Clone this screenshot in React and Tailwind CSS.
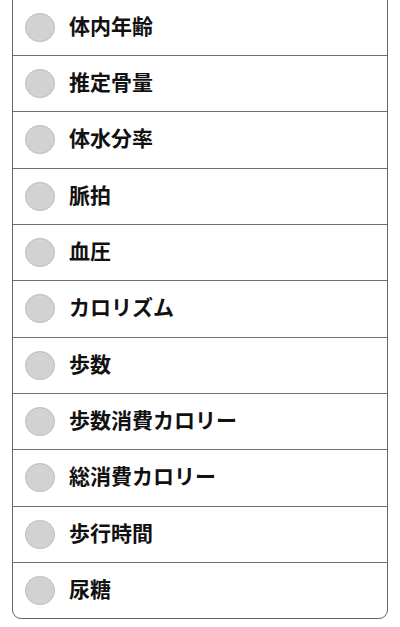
import React from 'react'

const items = [
    '体内年齢',
    '推定骨量',
    '体水分率',
    '脈拍',
    '血圧',
    'カロリズム',
    '歩数',
    '歩数消費カロリー',
    '総消費カロリー',
    '歩行時間',
    '尿糖',
]

const App = () => {
    return (
        <div
            className="w-[400px] h-[627px] overflow-hidden bg-white"
            style={{ fontFamily: '"Noto Sans CJK JP", "Noto Sans", sans-serif' }}
        >
            <div className="mx-[12px] mt-[-1.33px] border border-[#666] rounded-b-[9px] overflow-hidden">
                {items.map((label, i) => (
                    <div
                        key={label}
                        className={`flex items-center pl-[12px] gap-[14px] ${
                            i < items.length - 1
                                ? 'h-[56.33px] border-b border-[#707070]'
                                : 'h-[55.33px]'
                        }`}
                    >
                        <span className="w-[30px] h-[29px] rounded-full bg-[#d2d2d2] border border-[#bcbcbc] shrink-0" />
                        <span className="text-[21px] font-bold text-[#111] leading-none mb-[4px]">
                            {label}
                        </span>
                    </div>
                ))}
            </div>
        </div>
    )
}

export default App
